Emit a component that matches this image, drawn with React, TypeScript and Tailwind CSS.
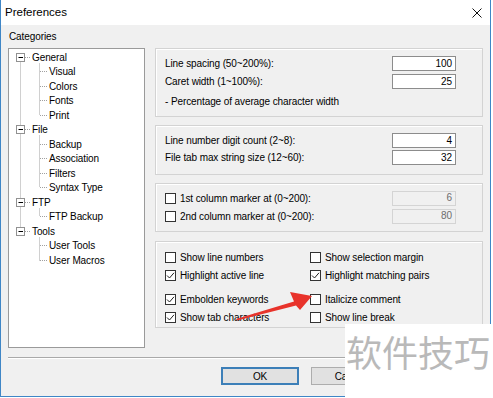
import React from "react";

const FONT = { fontFamily: '"Liberation Sans", Arial, sans-serif' };

type TreeItem = { t: string; lvl: number };
const TREE: TreeItem[] = [
  { t: "General", lvl: 0 },
  { t: "Visual", lvl: 1 },
  { t: "Colors", lvl: 1 },
  { t: "Fonts", lvl: 1 },
  { t: "Print", lvl: 1 },
  { t: "File", lvl: 0 },
  { t: "Backup", lvl: 1 },
  { t: "Association", lvl: 1 },
  { t: "Filters", lvl: 1 },
  { t: "Syntax Type", lvl: 1 },
  { t: "FTP", lvl: 0 },
  { t: "FTP Backup", lvl: 1 },
  { t: "Tools", lvl: 0 },
  { t: "User Tools", lvl: 1 },
  { t: "User Macros", lvl: 1 },
];

const ROW_H = 14.5;
const cy = (k: number) => Math.floor(1 + ROW_H * k + ROW_H / 2) + 0.5;

function TreeLines() {
  const roots = TREE.map((it, i) => (it.lvl === 0 ? i : -1)).filter((i) => i >= 0);
  const stroke = "#a0a0a0";
  const dash = "1 1";
  const groups: { parent: number; kids: number[] }[] = [];
  roots.forEach((r, idx) => {
    const end = idx + 1 < roots.length ? roots[idx + 1] : TREE.length;
    const kids: number[] = [];
    for (let i = r + 1; i < end; i++) kids.push(i);
    groups.push({ parent: r, kids });
  });
  return (
    <svg className="absolute left-0 top-0" width="135" height="297">
      <line x1="11.5" y1={cy(0)} x2="11.5" y2={cy(roots[roots.length - 1])} stroke={stroke} strokeDasharray={dash} />
      {groups.map((g) => (
        <g key={g.parent}>
          <line x1="16" y1={cy(g.parent)} x2="22" y2={cy(g.parent)} stroke={stroke} strokeDasharray={dash} />
          {g.kids.length > 0 && (
            <line x1="30.5" y1={cy(g.parent) + 6} x2="30.5" y2={cy(g.kids[g.kids.length - 1])} stroke={stroke} strokeDasharray={dash} />
          )}
          {g.kids.map((k) => (
            <line key={k} x1="31" y1={cy(k)} x2="38" y2={cy(k)} stroke={stroke} strokeDasharray={dash} />
          ))}
          <rect x="7.5" y={cy(g.parent) - 4} width="8" height="8" fill="#fff" stroke="#919191" />
          <line x1="9.5" y1={cy(g.parent)} x2="14" y2={cy(g.parent)} stroke="#000" />
        </g>
      ))}
    </svg>
  );
}

function Input({ value, disabled }: { value: string; disabled?: boolean }) {
  return (
    <div
      className={
        disabled
          ? "w-[64px] h-[15px] border border-[#d4d4d4] bg-[#f0f0f0] text-[#6d6d6d] flex items-center justify-end pr-[3px] leading-none"
          : "w-[64px] h-[15px] border border-[#8c8c8c] bg-white text-black flex items-center justify-end pr-[3px] leading-none"
      }
    >
      {value}
    </div>
  );
}

function Check({ checked }: { checked?: boolean }) {
  return (
    <div className="w-[11px] h-[11px] border border-[#333] bg-white shrink-0 relative">
      {checked && (
        <svg className="absolute -left-px -top-px" width="11" height="11" viewBox="0 0 11 11">
          <path d="M2 5.5 L4.5 8 L9 2.8" fill="none" stroke="#222" strokeWidth="1" />
        </svg>
      )}
    </div>
  );
}

function CheckRow({ label, checked }: { label: string; checked?: boolean }) {
  return (
    <div className="flex items-center gap-[4px] h-[18px]">
      <Check checked={checked} />
      <span className="whitespace-nowrap">{label}</span>
    </div>
  );
}

const groupCls = "border border-[#d3d3d3] shadow-[inset_1px_1px_0_#ffffff] box-border pl-[9px] pr-[26px]";

export default function App() {
  return (
    <div className="w-[493px] h-[398px] bg-white relative overflow-hidden text-[10px] tracking-[-0.1px] text-black" style={FONT}>
      <div className="w-[491px] h-[397px] border-l border-r border-b border-[#3f86c6] flex flex-col">
        {/* Title bar */}
        <div className="h-[25px] bg-white flex items-center justify-between shrink-0">
          <span className="pl-[4px] text-[11.5px] tracking-normal">Preferences</span>
          <svg className="mr-[8px]" width="10" height="10" viewBox="0 0 10 10">
            <path d="M0.5 0.5 L9.5 9.5 M9.5 0.5 L0.5 9.5" stroke="#111" strokeWidth="1" />
          </svg>
        </div>
        {/* Body */}
        <div className="flex-1 bg-[#f0f0f0] flex flex-col">
          <div className="flex gap-[10px] pl-[7px] pr-[7px] pt-[6px]">
            {/* Left */}
            <div className="w-[137px] flex flex-col">
              <div className="h-[12px] leading-[12px] mb-[5px] pl-[1px]">Categories</div>
              <div className="h-[300px] border border-[#9a9a9a] bg-white relative">
                <TreeLines />
                <div className="relative pt-[1px]">
                  {TREE.map((it) => (
                    <div
                      key={it.t}
                      className={it.lvl === 0 ? "h-[14.5px] flex items-center pl-[23px] whitespace-nowrap" : "h-[14.5px] flex items-center pl-[40px] whitespace-nowrap"}
                    >
                      {it.t}
                    </div>
                  ))}
                </div>
              </div>
            </div>
            {/* Right */}
            <div className="w-[328px] flex flex-col pt-[17px]">
              <div className={groupCls + " h-[69px] pt-[6px]"}>
                <div className="flex flex-col gap-[1px]">
                  <div className="h-[17px] flex items-center justify-between">
                    <span>Line spacing (50~200%):</span>
                    <Input value="100" />
                  </div>
                  <div className="h-[17px] flex items-center justify-between">
                    <span>Caret width (1~100%):</span>
                    <Input value="25" />
                  </div>
                </div>
                <div className="h-[16px] mt-[3px] flex items-center whitespace-nowrap">- Percentage of average character width</div>
              </div>
              <div className={groupCls + " h-[50px] pt-[6px] mt-[8px]"}>
                <div className="h-[17px] flex items-center justify-between">
                  <span>Line number digit count (2~8):</span>
                  <Input value="4" />
                </div>
                <div className="h-[17px] flex items-center justify-between">
                  <span>File tab max string size (12~60):</span>
                  <Input value="32" />
                </div>
              </div>
              <div className={groupCls + " h-[49px] pt-[5px] mt-[8px]"}>
                <div className="h-[18px] flex items-center justify-between">
                  <CheckRow label="1st column marker at (0~200):" />
                  <Input value="6" disabled />
                </div>
                <div className="h-[18px] flex items-center justify-between">
                  <CheckRow label="2nd column marker at (0~200):" />
                  <Input value="80" disabled />
                </div>
              </div>
              <div className={groupCls + " h-[87px] pt-[6px] mt-[9px]"}>
                <div className="grid grid-cols-[145px_1fr]">
                  <CheckRow label="Show line numbers" />
                  <CheckRow label="Show selection margin" />
                  <CheckRow label="Highlight active line" checked />
                  <CheckRow label="Highlight matching pairs" checked />
                </div>
                <div className="grid grid-cols-[145px_1fr] mt-[6px]">
                  <CheckRow label="Embolden keywords" checked />
                  <CheckRow label="Italicize comment" />
                  <CheckRow label="Show tab characters" checked />
                  <CheckRow label="Show line break" />
                </div>
              </div>
            </div>
          </div>
          {/* Separator */}
          <div className="mx-[7px] mt-[9px] h-[2px] border-t border-[#a9a9a9] border-b border-b-white" />
          {/* Buttons */}
          <div className="flex gap-[12px] pl-[220px] pt-[8px]">
            <div className="w-[78px] h-[18px] border-2 border-[#3c7fb8] bg-[#e1e1e1] flex items-center justify-center">OK</div>
            <div className="w-[78px] h-[18px] border border-[#adadad] bg-[#e1e1e1] flex items-center justify-center">Cancel</div>
          </div>
        </div>
      </div>

      {/* Red arrow annotation */}
      <svg className="absolute left-0 top-0 pointer-events-none" width="493" height="398">
        <polygon points="236,319 294,301.5 290,292 312,296 300,310 296,305.5 237,320.5" fill="#e8332b" />
      </svg>

      {/* Watermark */}
      <div className="absolute left-[345px] top-[324px] w-[148px] h-[74px] bg-white">
        <div
          className="absolute left-[1px] top-[9px] text-[36px] leading-none text-[#b9b9b9] tracking-normal whitespace-nowrap"
          style={{ fontFamily: '"Noto Sans CJK SC", "Noto Sans", sans-serif' }}
        >
          软件技巧
        </div>
      </div>
    </div>
  );
}
